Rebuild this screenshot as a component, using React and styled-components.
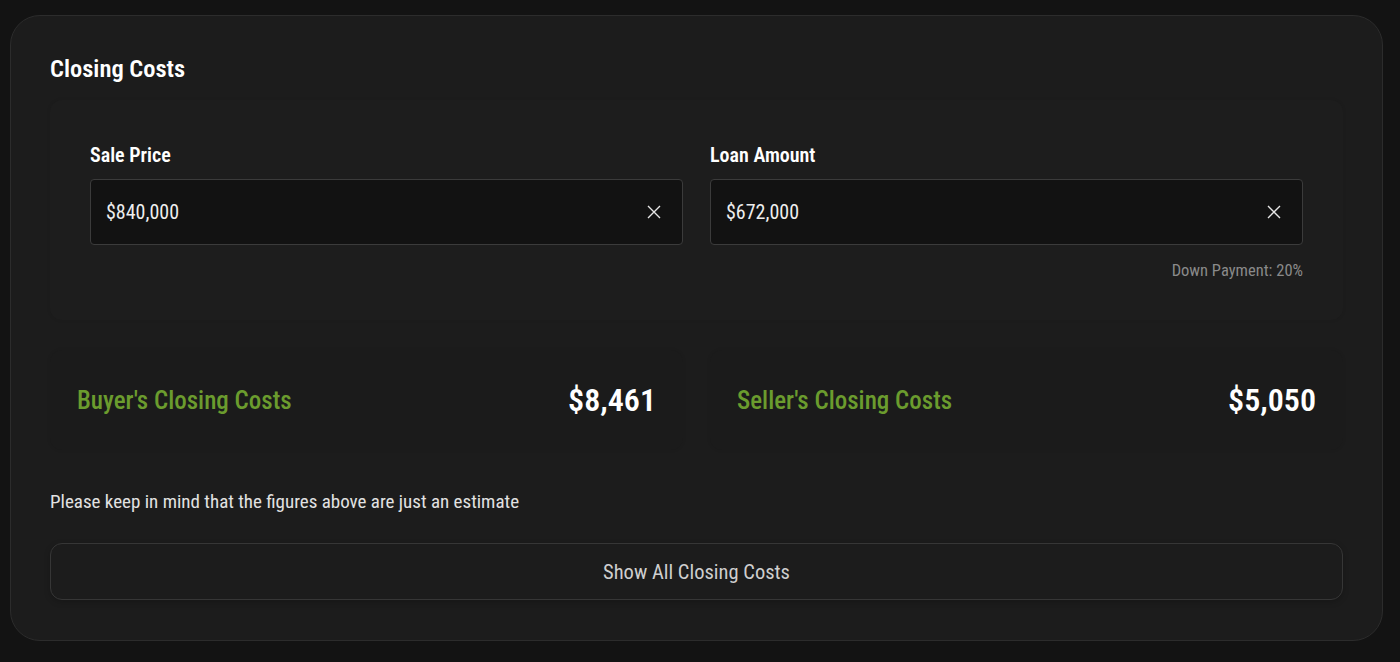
import React from 'react';
import styled, { createGlobalStyle } from 'styled-components';

const GlobalStyle = createGlobalStyle`
    body {
        margin: 0;
        background: #131313;
        font-family: "Roboto Condensed", Roboto, "Liberation Sans", sans-serif;
        font-stretch: condensed;
        color: #fff;
    }
`;

const CloseIcon = () => (
    <svg width="16" height="16" viewBox="0 0 16 16" fill="none">
        <path d="M2 2L14 14M14 2L2 14" stroke="#e6e6e6" strokeWidth="1.4" />
    </svg>
);

const AmountField = ({ label, value, hint }) => (
    <Field>
        <Label>{label}</Label>
        <InputBox>
            <InputText>{value}</InputText>
            <ClearButton>
                <CloseIcon />
            </ClearButton>
        </InputBox>
        {hint && <Hint>{hint}</Hint>}
    </Field>
);

const ResultCard = ({ title, amount }) => (
    <Result>
        <ResultTitle>{title}</ResultTitle>
        <ResultAmount>{amount}</ResultAmount>
    </Result>
);

export default function App() {
    return (
        <Page>
            <GlobalStyle />
            <Card>
                <Title>Closing Costs</Title>
                <InputsPanel>
                    <AmountField label="Sale Price" value="$840,000" />
                    <AmountField
                        label="Loan Amount"
                        value="$672,000"
                        hint="Down Payment: 20%"
                    />
                </InputsPanel>
                <Results>
                    <ResultCard title="Buyer's Closing Costs" amount="$8,461" />
                    <ResultCard title="Seller's Closing Costs" amount="$5,050" />
                </Results>
                <Note>Please keep in mind that the figures above are just an estimate</Note>
                <ShowAllButton>Show All Closing Costs</ShowAllButton>
            </Card>
        </Page>
    );
}

const Page = styled.div`
    padding: 15px 17px 21px 10px;
`;

const Card = styled.div`
    background: #1c1c1c;
    border: 1px solid #2c2c2c;
    border-radius: 30px;
    padding: 38px 39px 40px 39px;
    display: flex;
    flex-direction: column;
`;

const Title = styled.h2`
    margin: 0;
    font-size: 24.5px;
    font-weight: 600;
    line-height: 30px;
    color: #fff;
`;

const InputsPanel = styled.div`
    margin-top: 16px;
    padding: 43px 40px 39px;
    display: grid;
    grid-template-columns: 1fr 1fr;
    gap: 27px;
    border-radius: 12px;
    background: #1d1d1d;
    box-shadow: 0 0 4px rgba(0, 0, 0, 0.05);
`;

const Field = styled.div`
    display: flex;
    flex-direction: column;
`;

const Label = styled.div`
    font-size: 20px;
    font-weight: 600;
    line-height: 24px;
    margin-bottom: 12px;
`;

const InputBox = styled.div`
    height: 64px;
    display: flex;
    align-items: center;
    justify-content: space-between;
    padding: 0 20px 0 15px;
    background: #121212;
    border: 1px solid #3b3b3b;
    border-radius: 4px;
`;

const InputText = styled.span`
    font-size: 20px;
    color: #eee;
`;

const ClearButton = styled.span`
    display: flex;
    align-items: center;
`;

const Hint = styled.div`
    margin-top: 16px;
    align-self: flex-end;
    font-size: 16.5px;
    line-height: 20px;
    color: #8a8a8a;
`;

const Results = styled.div`
    margin-top: 30px;
    display: grid;
    grid-template-columns: 1fr 1fr;
    gap: 27px;
`;

const Result = styled.div`
    height: 100px;
    padding: 0 27px;
    display: flex;
    align-items: center;
    justify-content: space-between;
    border-radius: 12px;
    background: #1b1b1b;
    box-shadow: 0 0 4px rgba(0, 0, 0, 0.05);
`;

const ResultTitle = styled.span`
    font-size: 25px;
    font-weight: 500;
    color: #6b9c2e;
`;

const ResultAmount = styled.span`
    font-size: 32px;
    font-weight: 600;
    color: #fff;
`;

const Note = styled.p`
    margin: 40px 0 0;
    font-size: 19px;
    line-height: 24px;
    color: #e2e2e2;
`;

const ShowAllButton = styled.button`
    margin-top: 29px;
    height: 57px;
    border: 1px solid #363636;
    border-radius: 12px;
    background: #1c1c1c;
    box-shadow: 0 2px 6px rgba(0, 0, 0, 0.2);
    font-family: inherit;
    font-stretch: condensed;
    font-size: 20.5px;
    color: #cfcfcf;
    cursor: pointer;
`;
